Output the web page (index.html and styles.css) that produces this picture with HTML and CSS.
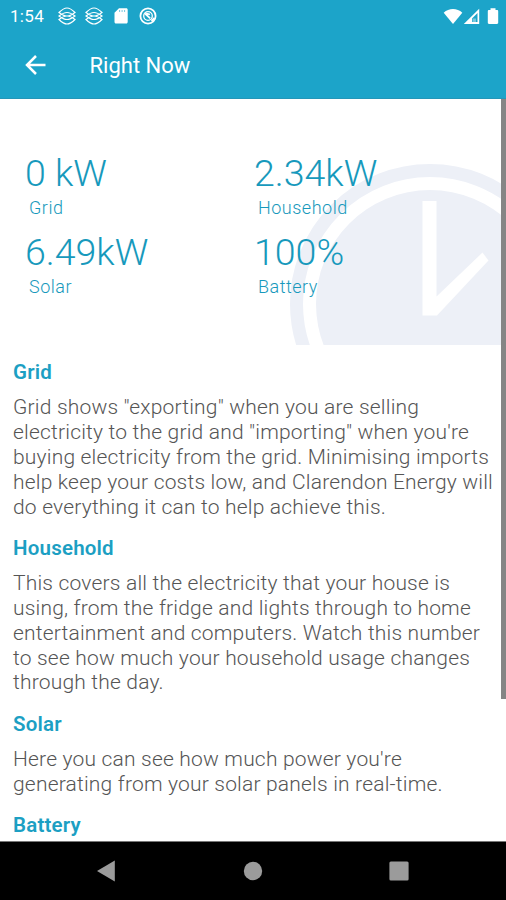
FILE: index.html
```html
<!DOCTYPE html>
<html lang="en">
<head>
  <meta charset="UTF-8">
  <meta name="viewport" content="width=device-width, initial-scale=1.0">
  <title>Right Now</title>
  <link rel="stylesheet" href="styles.css">
</head>
<body>

<header class="header">
  <div class="status-bar">
    <span class="time">1:54</span>
    <div class="notifications">
      <svg class="layers" width="18" height="18" viewBox="0 0 18 18">
        <path d="M1 5.500C4 2.500 6.500 1 9 1s5 1.500 8 4.500C14 7.800 11.500 9 9 9S4 7.800 1 5.500zM1 9c3-2.300 5.500-3.500 8-3.500s5 1.200 8 3.500c-3 2.300-5.500 3.500-8 3.500S4 11.300 1 9zM1 12.500C4 10.200 6.500 9 9 9s5 1.200 8 3.500c-3 3-5.500 4.500-8 4.500s-5-1.500-8-4.500z"/>
      </svg>
      <svg class="layers" width="18" height="18" viewBox="0 0 18 18">
        <path d="M1 5.500C4 2.500 6.500 1 9 1s5 1.500 8 4.500C14 7.800 11.500 9 9 9S4 7.800 1 5.500zM1 9c3-2.300 5.500-3.500 8-3.500s5 1.200 8 3.500c-3 2.300-5.500 3.500-8 3.500S4 11.300 1 9zM1 12.500C4 10.200 6.500 9 9 9s5 1.200 8 3.500c-3 3-5.500 4.500-8 4.500s-5-1.500-8-4.500z"/>
      </svg>
      <svg width="18" height="18" viewBox="0 0 18 18">
        <path fill="#fff" d="M7 1.200h7.200c.9 0 1.500.6 1.500 1.500v12.200c0 .9-.6 1.500-1.500 1.500H4c-.9 0-1.500-.6-1.500-1.500V5.700z"/>
        <path stroke="#1ca4c9" stroke-opacity=".6" d="M7.600 3v2M10.100 3v2M12.600 3v2"/>
      </svg>
      <svg width="18" height="18" viewBox="0 0 18 18" fill="none" stroke="#fff">
        <circle cx="9" cy="9" r="7.600" stroke-width="1.800"/>
        <circle cx="9" cy="9" r="4.300" stroke-width="1.300"/>
        <path stroke-width="1.800" d="m6 6.500 5.200 4.800M7 6.300l4 1.200M12.500 14l3-3"/>
      </svg>
    </div>
    <div class="system">
      <svg width="20" height="17" viewBox="0 0 20 17"><path fill="#fff" d="M.7 4.700C5.800-.1 14.200-.1 19.300 4.700L10 16z"/></svg>
      <svg width="17" height="17" viewBox="0 0 17 17"><path fill="#fff" fill-rule="evenodd" d="M16.200.7V16H.8zM14.500 5 9 10.500V14h5.500z"/><path fill="#fff" opacity=".4" d="M9.500 10.500H13V14H9.500z"/></svg>
      <svg width="12" height="17" viewBox="0 0 12 17"><path fill="#fff" d="M3.500.3h5V2H10c.7 0 1.200.5 1.200 1.200v11.600c0 .7-.5 1.200-1.200 1.200H2c-.7 0-1.200-.5-1.200-1.200V3.200C.8 2.500 1.300 2 2 2h1.500z"/></svg>
    </div>
  </div>
  <div class="app-bar">
    <svg class="back" width="22" height="22" viewBox="0 0 22 22"><path d="M20.500 11H2.500M11 2 2 11l9 9"/></svg>
    <h1 class="title">Right Now</h1>
  </div>
</header>

<main class="content">
  <section class="summary">
    <div class="reading">
      <div class="value">0 kW</div>
      <div class="label">Grid</div>
    </div>
    <div class="reading">
      <div class="value">2.34kW</div>
      <div class="label">Household</div>
    </div>
    <div class="reading">
      <div class="value">6.49kW</div>
      <div class="label">Solar</div>
    </div>
    <div class="reading">
      <div class="value">100%</div>
      <div class="label">Battery</div>
    </div>
    <svg class="clock" width="216" height="182" viewBox="0 0 216 182">
      <circle cx="140" cy="141" r="133.500" fill="none" stroke="#edf0f7" stroke-width="13"/>
      <circle cx="140" cy="141" r="114" fill="#edf0f7"/>
      <path fill="#fff" d="M132.500 38h14v95.500l46-44 6 8-51.500 55h-14.500z"/>
    </svg>
  </section>

  <section class="info">
    <h2>Grid</h2>
    <p>Grid shows "exporting" when you are selling<br>
      electricity to the grid and "importing" when you're<br>
      buying electricity from the grid. Minimising imports<br>
      help keep your costs low, and Clarendon Energy will<br>
      do everything it can to help achieve this.</p>
    <h2>Household</h2>
    <p>This covers all the electricity that your house is<br>
      using, from the fridge and lights through to home<br>
      entertainment and computers. Watch this number<br>
      to see how much your household usage changes<br>
      through the day.</p>
    <h2>Solar</h2>
    <p>Here you can see how much power you're<br>
      generating from your solar panels in real-time.</p>
    <h2>Battery</h2>
  </section>
  <div class="scrollbar"></div>
</main>

<nav class="nav-bar">
  <svg width="20" height="22" viewBox="0 0 20 22"><path d="M1 11 18.800.5v21z"/></svg>
  <svg width="20" height="22" viewBox="0 0 20 22"><circle cx="10" cy="11" r="9.200"/></svg>
  <svg width="20" height="22" viewBox="0 0 20 22"><rect x=".4" y="1.400" width="19.200" height="19.200" rx="1.500"/></svg>
</nav>

</body>
</html>
```
FILE: styles.css
```css
* {
  box-sizing: border-box;
}

body {
  display: flex;
  flex-direction: column;
  height: 900px;
  margin: 0;
  overflow: hidden;
  font-family: Roboto, sans-serif;
  background: #fff;
}

h1, h2, p {
  margin: 0;
}

svg {
  display: block;
  flex: none;
}

.header {
  height: 99px;
  flex: none;
  color: #fff;
  background: #1ca4c9;
  border-bottom: 1px solid #2496b8;
}

.status-bar {
  display: flex;
  align-items: center;
  height: 32px;
  padding: 0 7.5px 0 10px;
}

.time {
  width: 47.5px;
  font-size: 17px;
  letter-spacing: 0.3px;
}

.notifications {
  display: flex;
  gap: 9px;
}

.layers {
  fill: none;
  stroke: #fff;
  stroke-width: 1.2;
}

.system {
  display: flex;
  margin-left: auto;
}

.system svg:last-child {
  margin-left: 7px;
}

.app-bar {
  display: flex;
  align-items: center;
  height: 66px;
  padding-left: 24.5px;
}

.back {
  fill: none;
  stroke: #fff;
  stroke-width: 2.5;
}

.title {
  margin-left: 43px;
  font-size: 22px;
  font-weight: 400;
}

.content {
  position: relative;
  flex: 1;
  overflow: hidden;
}

.summary {
  position: relative;
  display: grid;
  grid-template-columns: 229px 1fr;
  grid-auto-rows: 79px;
  height: 246px;
  padding: 52px 0 0 25px;
  color: #1799bc;
}

.value {
  position: relative;
  z-index: 1;
  font-size: 37.5px;
  font-weight: 350;
  line-height: 45px;
}

.label {
  position: relative;
  z-index: 1;
  padding-left: 4px;
  font-size: 18px;
  font-weight: 350;
  line-height: 23px;
  letter-spacing: 0.5px;
}

.clock {
  position: absolute;
  right: 0;
  bottom: 0;
}

.info {
  padding: 14px 0 0 13px;
}

.info h2 {
  color: #1c9fc3;
  font-size: 20.5px;
  font-weight: 600;
  line-height: 26px;
  letter-spacing: 0.2px;
}

.info p {
  margin: 10.2px 0 15.5px;
  color: #555;
  font-size: 21px;
  font-weight: 300;
  line-height: 24.85px;
  letter-spacing: 0.19px;
  white-space: nowrap;
}

.scrollbar {
  position: absolute;
  top: 0;
  right: 0;
  width: 5px;
  height: 600px;
  background: #858585;
}

.nav-bar {
  display: flex;
  justify-content: space-between;
  align-items: center;
  flex: none;
  height: 59px;
  padding: 0 97px 0 96px;
  background: #000;
  border-top: 1px solid #777;
}

.nav-bar svg {
  fill: #9b9b9b;
}
```
